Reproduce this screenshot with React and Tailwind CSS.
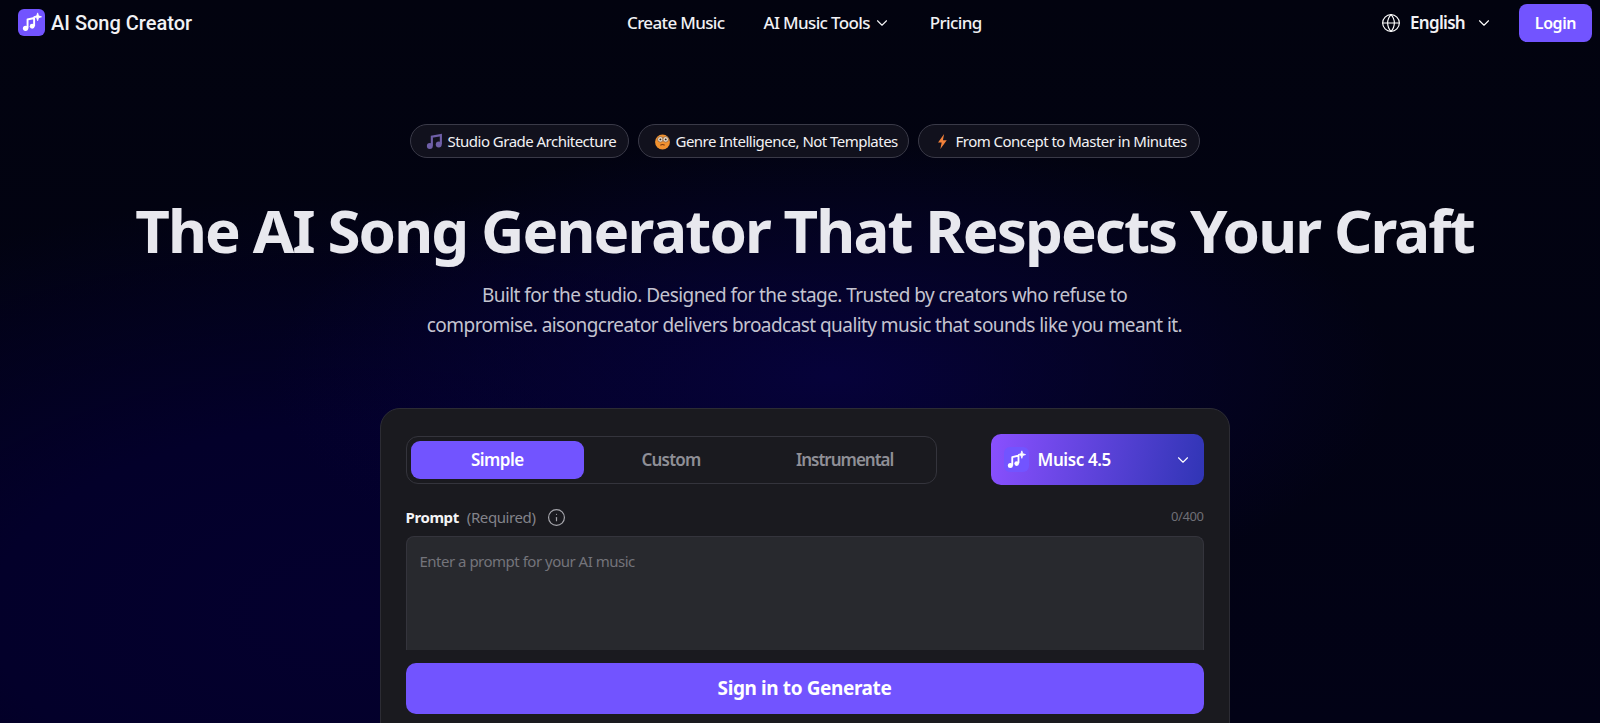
import React from 'react';
import { ChevronDown, Globe, Info } from 'lucide-react';

const NoteSpark = ({ className }) => (
  <svg viewBox="0 0 24 24" fill="none" className={className}>
    <path d="M7.5 18.5V8.6l7.5-1.8V16" stroke="#fff" strokeWidth="2.2" strokeLinejoin="round" />
    <circle cx="5.2" cy="18.7" r="3" fill="#fff" />
    <circle cx="12.8" cy="16.3" r="2.8" fill="#fff" />
    <path d="M19 1l1.1 3.4 3.4 1.1-3.4 1.1-1.1 3.4-1.1-3.4-3.4-1.1 3.4-1.1z" fill="#fff" stroke="#fff" strokeWidth="0.9" strokeLinejoin="round" />
  </svg>
);

const NoteEmoji = () => (
  <svg viewBox="0 0 16 16" className="w-[17px] h-[17px]">
    <path d="M5.5 12V3.4L14 2v8.5" fill="none" stroke="#6f5fa8" strokeWidth="2" />
    <circle cx="3.6" cy="12.2" r="2.8" fill="#6f5fa8" />
    <circle cx="12" cy="10.8" r="2.8" fill="#6f5fa8" />
  </svg>
);

const FaceEmoji = () => (
  <svg viewBox="0 0 16 16" className="w-[17px] h-[17px]">
    <circle cx="8" cy="8.5" r="7" fill="#f0912f" />
    <circle cx="6" cy="6" r="2.6" fill="#e9dccb" stroke="#7a4a20" strokeWidth="0.6" />
    <circle cx="11" cy="6" r="2.6" fill="#e9dccb" stroke="#7a4a20" strokeWidth="0.6" />
    <circle cx="6" cy="6" r="0.9" fill="#33221a" />
    <circle cx="11" cy="6" r="0.9" fill="#33221a" />
    <path d="M6 11.5q2-1.5 4 0" stroke="#7a3a14" strokeWidth="1" fill="none" />
  </svg>
);

const BoltEmoji = () => (
  <svg viewBox="0 0 16 16" className="w-[17px] h-[17px]">
    <path d="M9.5 1L3.8 9h3.4L6 15l6-8.2H8.4z" fill="#f2813a" />
  </svg>
);

const chips = [
  { icon: <NoteEmoji />, text: 'Studio Grade Architecture', width: 'w-[219px]' },
  { icon: <FaceEmoji />, text: 'Genre Intelligence, Not Templates', width: 'w-[271px]' },
  { icon: <BoltEmoji />, text: 'From Concept to Master in Minutes', width: 'w-[282px]' },
];

export default function App() {
  return (
    <div className="h-[723px] overflow-hidden bg-[#02030f] bg-[radial-gradient(ellipse_560px_240px_at_52%_52%,#06023a_0%,transparent_100%),radial-gradient(ellipse_800px_420px_at_22%_85%,#04002e_0%,#03002a_45%,transparent_100%),linear-gradient(180deg,#02030f_0%,#020216_100%)] text-white font-['Noto_Sans','Open_Sans',sans-serif]">
      <header className="h-[45px] flex items-center pl-[18px] pr-[8px]">
        <div className="flex items-center gap-[6px] w-[609px]">
          <div className="w-[27px] h-[27px] rounded-[6px] bg-[#7254ff] flex items-center justify-center">
            <NoteSpark className="w-[21px] h-[21px]" />
          </div>
          <span className="font-['Roboto',sans-serif] text-[20px] font-medium text-[#f1f1f4]">AI Song Creator</span>
        </div>
        <nav className="flex items-center gap-[39px] text-[17px] tracking-[-0.65px] font-medium text-[#f1f1f4]">
          <span>Create Music</span>
          <span className="flex items-center gap-[3px]">AI Music Tools <ChevronDown size={18} strokeWidth={1.5} /></span>
          <span>Pricing</span>
        </nav>
        <div className="flex items-center ml-auto">
          <Globe size={20} strokeWidth={1.4} className="mr-[9px]" />
          <span className="text-[17px] tracking-[-0.7px] font-semibold text-[#f1f1f4]">English</span>
          <ChevronDown size={18} strokeWidth={1.5} className="ml-[10px] mr-[26px]" />
          <button className="w-[73px] h-[38px] rounded-[8px] bg-[#7254ff] text-[16px] tracking-[-0.4px] font-semibold">Login</button>
        </div>
      </header>

      <main className="flex flex-col items-center pl-[9px]">
        <div className="mt-[79px] flex gap-[9px]">
          {chips.map((c) => (
            <div key={c.text} className={`${c.width} h-[34px] pl-[15px] rounded-full border border-[#3a3a48] bg-[#11111d] flex items-center gap-[5px] text-[15px] tracking-[-0.52px] text-[#f1f1f4]`}>
              {c.icon}
              <span>{c.text}</span>
            </div>
          ))}
        </div>
        <h1 className="mt-[32px] text-[60px] leading-[80px] tracking-[-1.9px] font-bold text-[#e8e8ee] whitespace-nowrap">The AI Song Generator That Respects Your Craft</h1>
        <p className="mt-[10px] w-[800px] text-center text-[19px] leading-[30px] tracking-[-0.56px] text-[#c4c4d0]">
          Built for the studio. Designed for the stage. Trusted by creators who refuse to
          <br />
          compromise. aisongcreator delivers broadcast quality music that sounds like you meant it.
        </p>

        <section className="mt-[68px] w-[850px] h-[400px] shrink-0 rounded-[20px] border border-[#2c2c34] bg-[#1a1a1f] pt-[25px] pl-[25px] pr-[25px]">
          <div className="flex items-center justify-between">
            <div className="w-[531px] h-[48px] rounded-[12px] border border-[#34343c] p-[4px] grid grid-cols-3 text-[17px] font-semibold text-[#8f8f96]">
              <button className="rounded-[9px] bg-[#7254ff] text-white font-semibold tracking-[-0.5px]">Simple</button>
              <button className="font-semibold tracking-[-0.8px]">Custom</button>
              <button className="font-semibold tracking-[-1px]">Instrumental</button>
            </div>
            <div className="w-[213px] h-[51px] rounded-[10px] bg-[linear-gradient(100deg,#8a50ff_0%,#3035b5_100%)] flex items-center pl-[13px] pr-[12px]">
              <div className="w-[25px] h-[25px] rounded-[6px] bg-[#7254ff] flex items-center justify-center mr-[9px]">
                <NoteSpark className="w-[20px] h-[20px]" />
              </div>
              <span className="text-[17px] tracking-[-0.4px] font-semibold flex-1">Muisc 4.5</span>
              <ChevronDown size={18} strokeWidth={1.5} />
            </div>
          </div>

          <div className="mt-[20px] h-[24px] flex items-center text-[15px] tracking-[-0.4px]">
            <span className="font-bold text-[#f4f4f6]">Prompt</span>
            <span className="ml-[8px] text-[#83838a]">(Required)</span>
            <Info size={19} strokeWidth={1.5} className="ml-[11px] text-[#a5a5ab]" />
            <span className="ml-auto text-[13px] text-[#6f6f76]">0/400</span>
          </div>

          <div className="mt-[7px] h-[114px] rounded-t-[8px] border border-b-0 border-[#34343c] bg-[#28292e] px-[13px] pt-[13px] text-[15px] tracking-[-0.5px] text-[#74747b]">
            Enter a prompt for your AI music
          </div>

          <button className="mt-[13px] w-full h-[51px] rounded-[10px] bg-[#7254ff] text-[19px] tracking-[-0.4px] font-bold">Sign in to Generate</button>
        </section>
      </main>
    </div>
  );
}
